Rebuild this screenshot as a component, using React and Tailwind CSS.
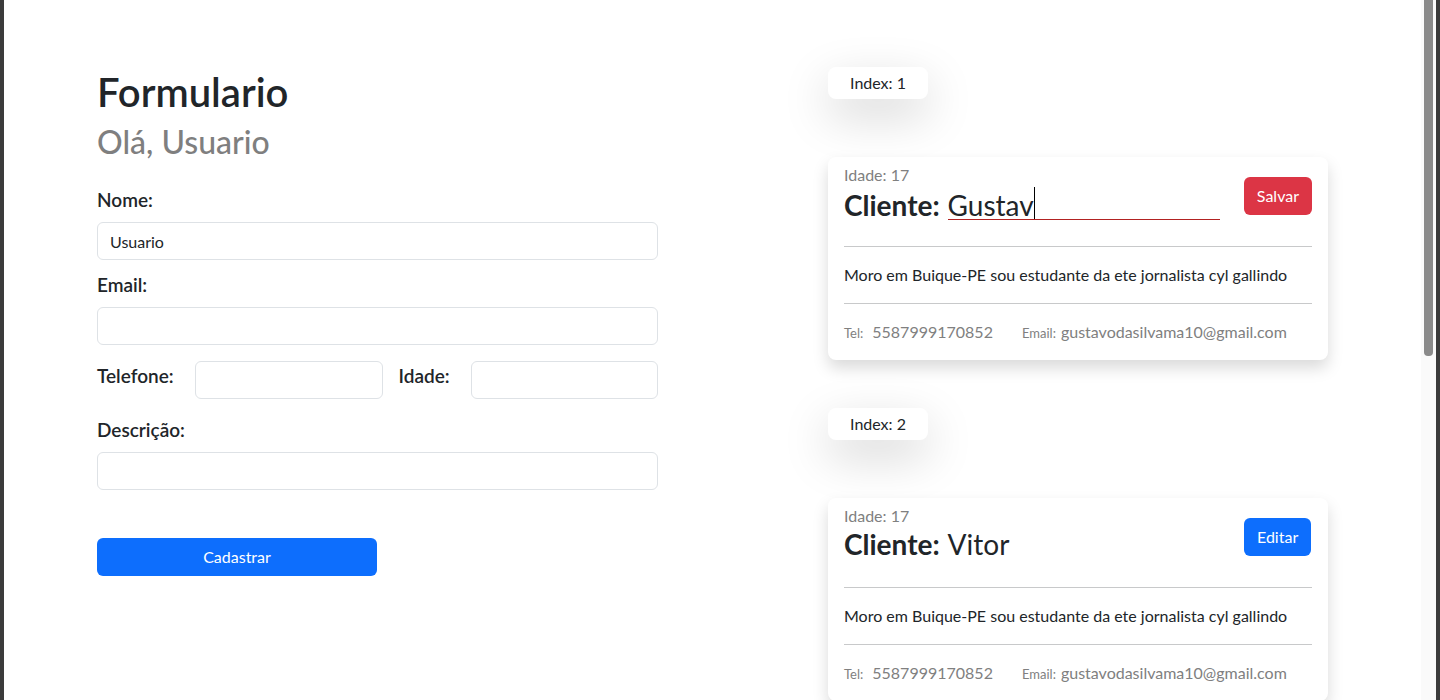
import React from 'react';

const clientes = [
  {
    index: 1,
    idade: 17,
    nome: 'Gustav',
    editando: true,
    descricao: 'Moro em Buique-PE sou estudante da ete jornalista cyl gallindo',
    telefone: '5587999170852',
    email: 'gustavodasilvama10@gmail.com',
  },
  {
    index: 2,
    idade: 17,
    nome: 'Vitor',
    editando: false,
    descricao: 'Moro em Buique-PE sou estudante da ete jornalista cyl gallindo',
    telefone: '5587999170852',
    email: 'gustavodasilvama10@gmail.com',
  },
];

function Campo({ label, className = '', value = '' }) {
  return (
    <div className={className}>
      <label className="block h-[28px] leading-[28px] text-[19px] font-semibold text-[#212529] mb-[8px]">{label}</label>
      <input
        readOnly
        value={value}
        className="w-full h-[38px] px-[12px] text-[16px] text-[#212529] border border-[#dee2e6] rounded-[6px] outline-none bg-white"
      />
    </div>
  );
}

function Formulario() {
  return (
    <div className="w-[561px] pt-[68px] shrink-0">
      <h1 className="text-[40px] leading-[1.2] font-semibold text-[#212529] mb-[7px]">Formulario</h1>
      <h2 className="text-[32px] leading-[1.2] font-medium text-[#7f7f7f]">Olá, Usuario</h2>

      <Campo label="Nome:" value="Usuario" className="mt-[25px]" />
      <Campo label="Email:" className="mt-[11px]" />

      <div className="flex items-start gap-[16px] mt-[16px]">
        <label className="w-[82px] shrink-0 pt-[1px] h-[28px] leading-[28px] text-[19px] font-semibold text-[#212529]">Telefone:</label>
        <input readOnly className="flex-1 min-w-0 h-[38px] px-[12px] border border-[#dee2e6] rounded-[6px] outline-none" />
        <label className="w-[56px] shrink-0 pt-[1px] h-[28px] leading-[28px] text-[19px] font-semibold text-[#212529]">Idade:</label>
        <input readOnly className="flex-1 min-w-0 h-[38px] px-[12px] border border-[#dee2e6] rounded-[6px] outline-none" />
      </div>

      <Campo label="Descrição:" className="mt-[17px]" />

      <button className="mt-[48px] w-[280px] h-[38px] bg-[#0d6efd] text-white text-[16px] rounded-[6px]">
        Cadastrar
      </button>
    </div>
  );
}

function CardCliente({ c }) {
  return (
    <div className="mb-[48px]">
      <div className="w-[100px] h-[32px] flex items-center justify-center bg-white rounded-[8px] text-[16px] text-[#212529] shadow-[0_1rem_3rem_rgba(0,0,0,0.175)]">
        Index: {c.index}
      </div>

      <div className="mt-[58px] bg-white rounded-[8px] px-[16px] pt-[6px] pb-[15px] shadow-[0_0.5rem_1rem_rgba(0,0,0,0.15)]">
        <div className="flex items-start">
          <div className="w-[400px]">
            <div className="text-[16px] leading-[24px] text-[#808080]">Idade: {c.idade}</div>
            <h3 className="flex items-baseline min-h-[36px] text-[28px] leading-[1.2] text-[#212529]">
              <strong className="font-bold">Cliente:</strong>
              {c.editando ? (
                <div className="ml-[8px] w-[272px] h-[33px] flex items-end border-b border-[#b22222]">
                  <span className="leading-[28px]">{c.nome}</span>
                  <span className="w-px h-[32px] bg-black"></span>
                </div>
              ) : (
                <span className="ml-[8px]">{c.nome}</span>
              )}
            </h3>
          </div>
          {c.editando ? (
            <button className="mt-[14px] h-[38px] px-[13px] bg-[#dc3545] text-white text-[16px] rounded-[6px]">Salvar</button>
          ) : (
            <button className="mt-[14px] h-[38px] px-[13px] bg-[#0d6efd] text-white text-[16px] rounded-[6px]">Editar</button>
          )}
        </div>

        <div className="mt-[23px] h-px bg-[#c8c9ca]"></div>
        <p className="mt-[16px] text-[16px] leading-[24px] text-[#212529]">{c.descricao}</p>
        <div className="mt-[16px] h-px bg-[#c8c9ca]"></div>

        <div className="mt-[16px] flex items-baseline leading-[24px] text-[#808080]">
          <div className="w-[178px] shrink-0">
            <span className="text-[13px]">Tel:</span>
            <span className="ml-[9px] text-[16px]">{c.telefone}</span>
          </div>
          <div>
            <span className="text-[13px]">Email:</span>
            <span className="ml-[5px] text-[16px]">{c.email}</span>
          </div>
        </div>
      </div>
    </div>
  );
}

export default function App() {
  return (
    <div className="h-[700px] overflow-hidden flex bg-[#3b3b3b]" style={{ fontFamily: 'Lato, "Noto Sans", sans-serif' }}>
      <div className="w-[4px] shrink-0"></div>
      <main className="flex-1 bg-white flex pl-[93px] overflow-hidden">
        <Formulario />
        <section className="ml-[170px] w-[500px] shrink-0 pt-[67px]">
          {clientes.map(c => <CardCliente key={c.index} c={c} />)}
        </section>
      </main>
      <div className="w-[15px] shrink-0 bg-[#fafafa]">
        <div className="ml-[3px] w-[9px] h-[356px] bg-[#8a8a8a] rounded-b-[4px]"></div>
      </div>
      <div className="w-[4px] shrink-0"></div>
    </div>
  );
}
